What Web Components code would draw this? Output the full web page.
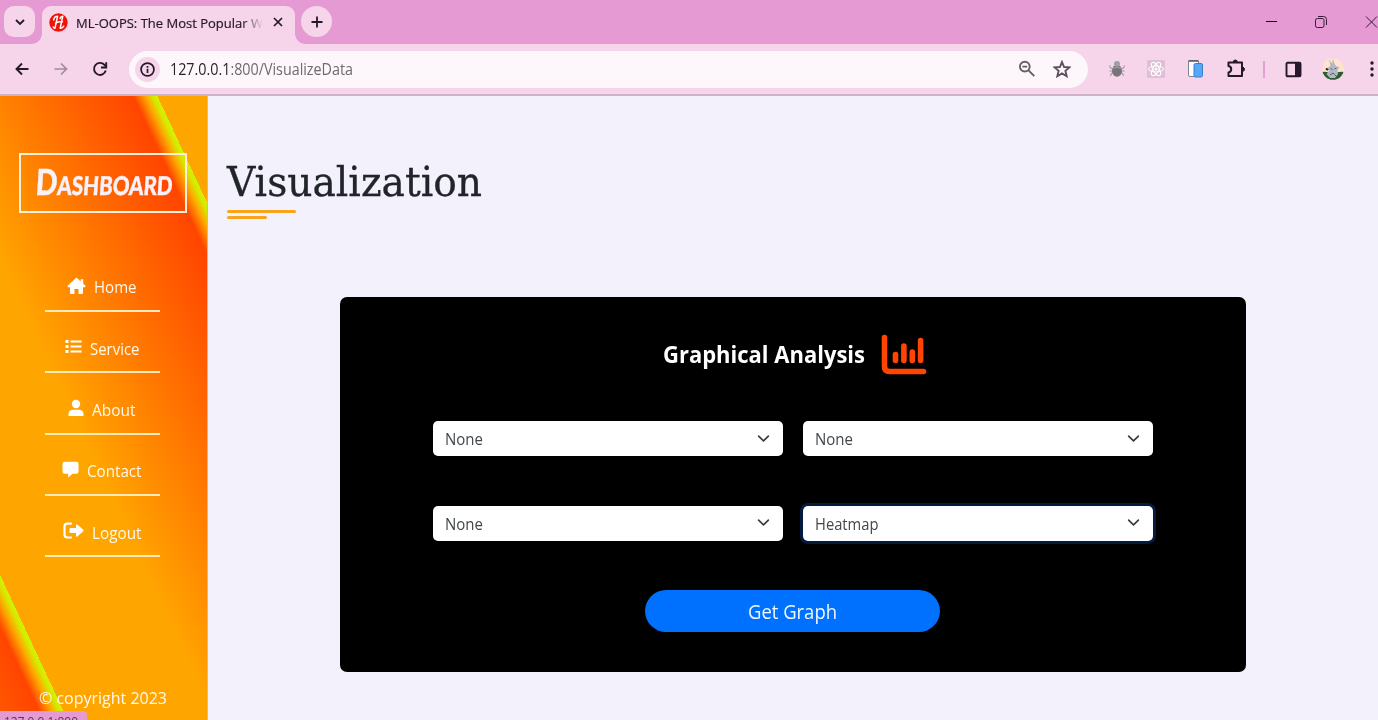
<!DOCTYPE html>
<html lang="en">
<head>
<meta charset="utf-8">
<title>ML-OOPS: The Most Popular Web App</title>
<style>
html,body{margin:0;height:100%}
body{width:1378px;height:720px;overflow:hidden;display:flex;flex-direction:column;font-family:"Open Sans","Noto Sans",sans-serif;background:#f3f1fc}
.page{flex:1;display:flex;min-height:0}
</style>
</head>
<body>
<browser-chrome></browser-chrome>
<div class="page">
  <side-bar>
    <nav-item icon="home" w="42.5">Home</nav-item>
    <nav-item icon="list" w="49.5">Service</nav-item>
    <nav-item icon="user" w="43.5">About</nav-item>
    <nav-item icon="chat" w="54.5">Contact</nav-item>
    <nav-item icon="exit" w="49.5">Logout</nav-item>
  </side-bar>
  <main-view></main-view>
</div>
<status-bubble>127.0.0.1:800</status-bubble>
<script>
const define = (name, html, init) => customElements.define(name, class extends HTMLElement {
  connectedCallback() {
    if (this.shadowRoot) return;
    this.attachShadow({mode: 'open'}).innerHTML = html;
    if (init) init(this, this.shadowRoot);
  }
});

/* One line of text condensed or widened to the width in its "w" attribute. */
define('fit-text', `<style>
:host{display:inline-block;white-space:nowrap;flex:none}
span{display:inline-block;transform-origin:0 50%}
</style><span><slot></slot></span>`, (host, root) => {
  const w = +host.getAttribute('w'), s = root.querySelector('span');
  const n = s.getBoundingClientRect().width;
  host.style.width = w + 'px';
  if (n) s.style.transform = `scaleX(${w / n})`;
});

define('browser-chrome', `<style>
:host{display:block;height:96px;flex:none;box-sizing:border-box;background:#f6d4e9;border-bottom:2px solid #ccb4c6;color:#24182a}
svg{display:block;flex:none}
.strip{height:44px;background:#e69ad3;display:flex;align-items:flex-end;position:relative}
.menu{width:31px;height:31px;margin:0 7px 7px 4px;border-radius:10px;background:#f6d4e9;display:grid;place-items:center}
.tab{position:relative;width:253px;height:38px;border-radius:9px 9px 0 0;background:#f6d4e9;display:flex;align-items:center;box-sizing:border-box;padding:0 9px 6px 7px}
.tab::before,.tab::after{content:"";position:absolute;bottom:0;width:10px;height:10px}
.tab::before{left:-10px;background:radial-gradient(circle at 0 0,transparent 9.5px,#f6d4e9 10px)}
.tab::after{right:-10px;background:radial-gradient(circle at 100% 0,transparent 9.5px,#f6d4e9 10px)}
.title{height:20px;line-height:20px;margin:2px auto 0 8px;font-size:13.5px;font-weight:500;-webkit-text-stroke:.2px;-webkit-mask:linear-gradient(90deg,#000 166px,transparent 187px)}
.new{width:31px;height:31px;border-radius:50%;background:#f6d4e9;margin:0 0 7px 6px;display:grid;place-items:center}
.win{margin-left:auto;display:flex;align-items:center;height:44px;gap:42px;margin-right:-2px}
.bar{height:50px;display:flex;align-items:center;position:relative}
.nav{display:flex;gap:21px;width:115px;padding-left:13px;margin-right:1px}
.omni{width:959px;height:37px;border-radius:19px;background:#fdf6fa;display:flex;align-items:center;box-sizing:border-box;padding:0 17px 0 6px}
.info{width:25px;height:25px;border-radius:50%;background:#f6d4e9;display:grid;place-items:center;margin-right:10px}
.url{font-size:15.500px;color:#70686f;margin-top:-1px}.url b{font-weight:400;color:#2a2229}
.right{margin-left:auto;display:flex;gap:17px}
.ext{display:flex;align-items:center;margin-left:20px;gap:20px}
</style>
<div class="strip">
 <div class="menu"><svg width="12" height="12" viewBox="0 0 12 12"><path d="M2 4l4 4 4-4" fill="none" stroke="currentColor" stroke-width="1.8"/></svg></div>
 <div class="tab">
  <svg width="19" height="19" viewBox="0 0 19 19"><circle cx="9.500" cy="9.500" r="9.200" fill="#ee1409"/><path d="M8.600 3.200L6 15.200M13.800 3.200L11.200 15.200M6.500 10.200q3.500-2 7-1.500M8.600 3.200Q5.300 3.200 4.600 7M13.800 3.200Q11.800 3.200 11 5.500M11.200 15.200q2.300.3 3.500-2M6 15.200Q4.800 15.500 4.300 14" fill="none" stroke="#fff" stroke-width="1.500" stroke-linecap="round"/></svg>
  <div class="title"><fit-text w="187">ML-OOPS: The Most Popular W</fit-text></div>
  <svg width="16" height="16" viewBox="0 0 16 16"><path d="M4 4l8 8M12 4l-8 8" stroke="currentColor" stroke-width="1.700"/></svg>
 </div>
 <div class="new"><svg width="14" height="14" viewBox="0 0 14 14"><path d="M7 1.500v11M1.500 7h11" stroke="currentColor" stroke-width="1.800"/></svg></div>
 <div class="win">
  <svg width="12" height="12"><path d="M0 6h11" stroke="#18091a" transform="translate(0 -.5)"/></svg>
  <svg width="12" height="12" viewBox="0 0 12 12" fill="none" stroke="#39183a" style="margin:0 -4px 0 -5px"><rect x=".5" y="2.500" width="8.500" height="9" rx="1.800"/><path d="M3 .5h5.500a3 3 0 0 1 3 3V9"/></svg>
  <svg width="15" height="12" style="margin-left:0"><path d="M1 .5l11 11M12 .5l-11 11" stroke="#39183a"/></svg>
 </div>
</div>
<div class="bar">
 <div class="nav">
  <svg width="18" height="18" viewBox="0 0 18 18" fill="none" stroke="currentColor" stroke-width="1.900"><path d="M15.500 9H3.500M9 3.500L3.500 9 9 14.500"/></svg>
  <svg width="18" height="18" viewBox="0 0 18 18" fill="none" stroke="#a08aa0" stroke-width="1.700"><path d="M2.500 9h12M9 3.500l5.500 5.500L9 14.500"/></svg>
  <svg width="18" height="18" viewBox="0 0 18 18" fill="none" stroke="currentColor" stroke-width="1.900"><path d="M14.800 10.500A6 6 0 1 1 13.500 4.900L15 6.500"/><path d="M15.200 2.300v5.200h-5.200"/></svg>
 </div>
 <div class="omni">
  <div class="info"><svg width="17" height="17" viewBox="0 0 17 17"><circle cx="8.500" cy="8.500" r="6.400" fill="none" stroke="currentColor" stroke-width="1.700"/><path d="M8.500 7.700v4.200M8.500 5v1.700" stroke="currentColor" stroke-width="1.700"/></svg></div>
  <fit-text class="url" w="183"><b>127.0.0.1</b>:800/VisualizeData</fit-text>
  <div class="right">
   <svg width="18" height="18" viewBox="0 0 18 18" fill="none" stroke="#685d67" stroke-width="1.900"><circle cx="6.800" cy="6.600" r="4.900"/><path d="M10.300 10.200l6 6M4.400 6.600h4.800"/></svg>
   <svg width="18" height="18" viewBox="0 0 18 18"><path d="M9 2l2.100 5 5.400.4-4.100 3.500 1.300 5.300L9 13.400l-4.700 2.800 1.300-5.300L1.500 7.400 6.900 7z" fill="none" stroke="#5d525c" stroke-width="1.900"/></svg>
  </div>
 </div>
 <div class="ext">
  <svg width="18" height="18" viewBox="0 0 18 18"><path d="M1.500 5.500l1 2.500 3 1M1.500 11h3.500M2.500 16l1-2.500 2-1M16.500 5.500l-1 2.500-3 1M16.500 11h-3.500M15.500 16l-1-2.500-2-1" stroke="#a598a2" stroke-width="1.100" fill="none"/><ellipse cx="9" cy="10.800" rx="5" ry="6" fill="#77757a"/><ellipse cx="9" cy="3.800" rx="3" ry="2.800" fill="#a19ea3"/><path d="M4.500 8.500q4.500-3 9 0" stroke="#a5a2a7" fill="none"/></svg>
  <svg width="18" height="18" viewBox="0 0 18 18" style="margin-left:1px"><rect width="18" height="18" rx="1" fill="#dfbfd5"/><g fill="none" stroke="#fff" stroke-width="1"><ellipse cx="9" cy="9" rx="7.500" ry="3"/><ellipse cx="9" cy="9" rx="7.500" ry="3" transform="rotate(60 9 9)"/><ellipse cx="9" cy="9" rx="7.500" ry="3" transform="rotate(120 9 9)"/></g><circle cx="9" cy="9" r="1.500" fill="#fff"/></svg>
  <svg width="18" height="20" viewBox="0 0 18 20" style="margin-left:1px"><rect x="2.500" y="1.500" width="10" height="16" rx="1.500" fill="#fff" stroke="#7d8190"/><path d="M2.500 2h10" stroke="#555968" stroke-width="1.500"/><rect x="8" y="4.500" width="8.500" height="13.500" rx="1.500" fill="#56a8fa" stroke="#3d7bc9"/></svg>
  <svg width="20" height="20" viewBox="0 0 20 20" style="margin:-1px 0 0 1px"><path d="M3.500 3.500h13.500v13.500h-13.500v-3.500q2.700-.5 2.700-3.200t-2.700-3.200z" fill="none" stroke="currentColor" stroke-width="2" stroke-linejoin="round"/><path d="M8.300 3a2 2 0 0 1 4 0M17.500 8.300a2 2 0 0 1 0 4" fill="currentColor" stroke="currentColor"/></svg>
  <svg width="2" height="17" style="margin-left:-2px"><path d="M1 0v17" stroke="#de91cb" stroke-width="1.500"/></svg>
  <svg width="17" height="17" viewBox="0 0 17 17"><rect x="1.500" y="1.800" width="14" height="13.500" rx="1" fill="none" stroke="currentColor" stroke-width="1.900"/><path d="M10 2h5.500v13H10z" fill="currentColor"/></svg>
  <svg width="22" height="22" viewBox="0 0 22 22"><defs><clipPath id="c"><circle cx="11" cy="11" r="10.800"/></clipPath></defs><g clip-path="url(#c)"><path fill="#ffe3cf" d="M0 0h22v22H0z"/><path d="M0 14q5-1 11 2 6-3 11-2v9H0z" fill="#2c5b36"/><path d="M8.500 8L7 1.500l3 4L11 1l1.500 5 2 2.500 3 .5-2 3 .5 4-3 4H8l-3.500-4 2.500-3-1.500-3z" fill="#b2b8c4"/><path d="M8.500 10.500l2 1m2-.5l2-1M8 17l3-2 3 3" stroke="#59606f" fill="none"/><path d="M4 10.500l2 1.500" stroke="#222" stroke-width="2"/></g></svg>
  <svg width="6" height="18" viewBox="0 0 6 18" style="margin-left:5px"><g fill="currentColor"><circle cx="3" cy="3" r="1.700"/><circle cx="3" cy="9" r="1.700"/><circle cx="3" cy="15" r="1.700"/></g></svg>
 </div>
</div>`);

define('side-bar', `<style>
:host{width:208px;flex:none;box-sizing:border-box;border-right:1px solid #ffb060;display:flex;flex-direction:column;align-items:flex-start;color:#fff8ec;
background:repeating-linear-gradient(245deg,orange 0,orange 45px,#cff500 45px,#d8e800 49px,orange 56px,#ff4500 67px,orange 257px,orange 345px)}
.logo{width:168px;height:60px;box-sizing:border-box;border:2px solid #fff0dc;margin:57px 0 0 19px;display:flex;align-items:center;justify-content:center;color:#faf1fa}
.logo fit-text{font:900 26px/1 "Lato",sans-serif;-webkit-text-stroke:.4px;transform:translate(2px,-2px) skewX(-4deg)}
.logo b{font-size:36px;font-weight:900}
nav{margin:43px 0 0 45px;width:115px}
footer{margin:auto 0 10px 39px;font-size:16.500px;line-height:24px}
</style>
<div class="logo"><fit-text w="139"><b>D</b>ASHBOARD</fit-text></div>
<nav><slot></slot></nav>
<footer><fit-text w="128">© copyright 2023</fit-text></footer>`);

const icons = {
  home: [19, '<path d="M9.500.5L.3 9l.9 1.200H3V16q0 1 1 1h3.500v-5h4v5H15q1 0 1-1v-5.800h1.800l.9-1.200-2.500-2.400V2.300h-2.500v2z"/>'],
  list: [17, '<path d="M.5 2h3v3h-3zM.5 7h3v3h-3zM.5 12h3v3h-3zM5.500 2.500h11v2h-11zM5.500 7.500h11v2h-11zM5.500 12.500h11v2h-11z"/>'],
  user: [16, '<circle cx="8" cy="5" r="4.200"/><path d="M.5 17v-2q0-4.300 5-4.300h5q5 0 5 4.300v2z"/>'],
  chat: [17, '<path d="M2.500.8h12a2 2 0 0 1 2 2v8a2 2 0 0 1-2 2h-4l-4.300 3.700v-3.700H2.500a2 2 0 0 1-2-2v-8a2 2 0 0 1 2-2z"/>'],
  exit: [21, '<path d="M8 1.600H4.500Q1.500 1.600 1.500 4.500v8q0 3 3 3H8" fill="none" stroke="#fff" stroke-width="2.200" stroke-linecap="round"/><path d="M7.500 6h5.500V3.200q0-1.500 1.300-.6l6 5.200q.8.700 0 1.400l-6 5.200q-1.300.9-1.300-.6v-2.800H7.500q-1 0-1-1V7q0-1 1-1z"/>']
};
define('nav-item', `<style>
:host{display:flex;height:61.400px;box-sizing:border-box;align-items:center;justify-content:center;font-size:16.500px;position:relative}
:host::after{content:"";position:absolute;left:0;right:0;bottom:5.500px;height:2px;background:#ffe9bd}
svg{fill:#fff;margin:-2px 8px 0 -1px;flex:none}
</style><svg height="18"></svg><fit-text><slot></slot></fit-text>`, (host, root) => {
  const [w, path] = icons[host.getAttribute('icon')];
  const svg = root.querySelector('svg'), label = root.querySelector('fit-text');
  svg.setAttribute('width', w);
  svg.innerHTML = path;
  const span = label.shadowRoot.querySelector('span'), fit = +host.getAttribute('w');
  span.style.transform = 'none';
  const natural = span.getBoundingClientRect().width;
  label.style.width = fit + 'px';
  span.style.transform = `scaleX(${fit / natural})`;
});

define('select-box', `<style>
:host{display:flex;align-items:center;justify-content:space-between;height:35px;box-sizing:border-box;padding:1px 13px 0 12px;background:#fff;border-radius:5px;color:#42474b;font-size:15.500px}
:host([focused]){box-shadow:0 0 0 3px #031b3e}
svg{margin-top:-2px}
</style><slot></slot><svg width="13" height="13" viewBox="0 0 16 16"><path d="M2 5l6 6 6-6" fill="none" stroke="#343a40" stroke-width="2" stroke-linecap="round" stroke-linejoin="round"/></svg>`);

define('analysis-card', `<style>
:host{display:flex;flex-direction:column;align-items:center;width:905.500px;height:375px;background:#000;border-radius:7px}
header{display:flex;align-items:center;height:44px;margin-top:36px;gap:16px;color:#fff;font-size:23px;font-weight:700;padding-left:5px}
header fit-text{margin-top:-2px}
.grid{display:grid;grid-template-columns:350.500px 350.500px;gap:49.500px 19.500px;margin-top:44px}
button{width:295px;height:42px;margin:49.500px 0 0;border:0;padding:2px 0 0;border-radius:21px;background:#0070ff;color:#eef8ff;font:20px/28px "Open Sans",sans-serif}
</style>
<header><fit-text w="202">Graphical Analysis</fit-text><svg width="46" height="42" viewBox="0 0 46 42" fill="none" stroke="#ff4500" stroke-linecap="round"><path d="M3.500 3.500V32.500q0 5 5 5H42.500" stroke-width="5.600" stroke-linejoin="round"/><path d="M14.500 20.500v6M22.900 12v14.500M31.300 18v8.500M39.600 6.500v20" stroke-width="5.600"/></svg></header>
<div class="grid">
 <select-box><fit-text w="38">None</fit-text></select-box>
 <select-box><fit-text w="38">None</fit-text></select-box>
 <select-box><fit-text w="38">None</fit-text></select-box>
 <select-box focused><fit-text w="63.500">Heatmap</fit-text></select-box>
</div>
<button><fit-text w="89">Get Graph</fit-text></button>`);

define('main-view', `<style>
:host{display:block;flex:1;min-width:0;background:#f3f1fc}
h1{margin:59px 0 0 19px;height:55px;line-height:54px;font-weight:400;font-size:41px;font-family:"DejaVu Serif",serif;color:#212529;-webkit-text-stroke:.3px #212529}
.rule{height:3px;border-radius:2px;background:#f8a51b;margin:0 0 3px 19px;width:69px}
.short{width:40px}
analysis-card{margin:78px 0 0 132px}
</style>
<h1><fit-text w="255">Visualization</fit-text></h1>
<div class="rule"></div><div class="rule short"></div>
<analysis-card></analysis-card>`);

define('status-bubble', `<style>
:host{position:absolute;left:0;top:711px;width:87px;height:9px;overflow:hidden;background:#e69ad3;border-radius:0 4px 0 0;color:#54394f;font-size:12px;line-height:16px}
fit-text{margin:3px 0 0 4px}
</style><fit-text w="74"><slot></slot></fit-text>`);
</script>
</body>
</html>
